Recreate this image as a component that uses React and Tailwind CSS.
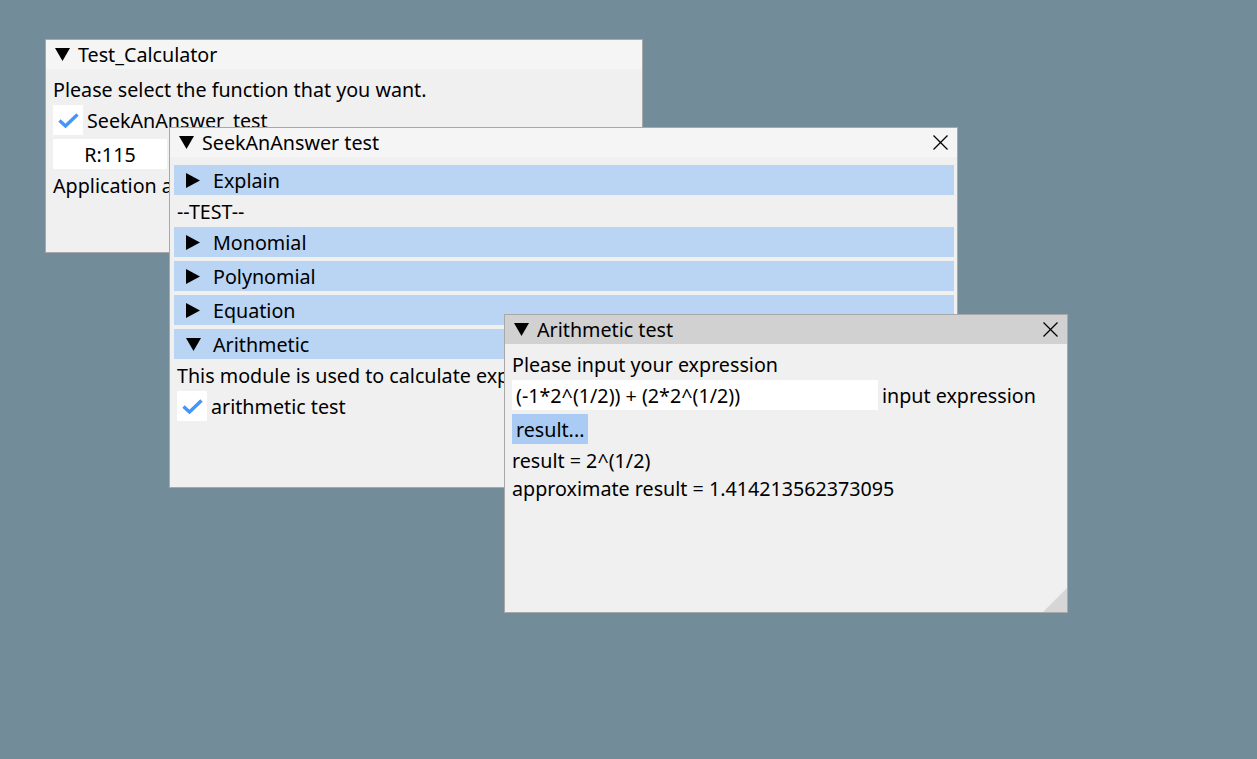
import React from "react";

function DownTri() {
  return (
    <span className="w-[16px] h-[16px] flex items-center justify-center shrink-0">
      <svg width="15" height="13" viewBox="0 0 15 13">
        <polygon points="0,0 15,0 7.5,13" fill="#000" />
      </svg>
    </span>
  );
}

function RightTri() {
  return (
    <span className="w-[16px] h-[16px] flex items-center justify-center shrink-0">
      <svg width="14" height="15" viewBox="0 0 14 15">
        <polygon points="0,0 14,7.5 0,15" fill="#000" />
      </svg>
    </span>
  );
}

function CloseX() {
  return (
    <svg width="15" height="15" viewBox="0 0 15 15" className="ml-auto shrink-0">
      <line x1="0.5" y1="0.5" x2="14.5" y2="14.5" stroke="#000" strokeWidth="1.2" />
      <line x1="14.5" y1="0.5" x2="0.5" y2="14.5" stroke="#000" strokeWidth="1.2" />
    </svg>
  );
}

function Checkbox({ label }) {
  return (
    <div className="flex items-center h-[30px]">
      <div className="w-[30px] h-[30px] bg-white flex items-center justify-center shrink-0">
        <svg width="21" height="15" viewBox="0 0 21 15">
          <polyline points="1.5,7.5 7.5,13 19.5,1.5" fill="none" stroke="#4296fa" strokeWidth="3.4" />
        </svg>
      </div>
      <span className="ml-[4px] pt-[2px] whitespace-nowrap">{label}</span>
    </div>
  );
}

function Header({ label, open }) {
  return (
    <div className="h-[30px] -ml-[3px] -mr-[4px] bg-[#bad4f3] flex items-center pl-[11px] shrink-0">
      {open ? <DownTri /> : <RightTri />}
      <span className="ml-[12px] pt-[2px] whitespace-nowrap">{label}</span>
    </div>
  );
}

function Line({ children }) {
  return <div className="h-[24px] pt-[2px] flex items-center whitespace-nowrap shrink-0">{children}</div>;
}

function Win({ className, title, active, close, grip, children }) {
  return (
    <div className={`absolute flex flex-col border border-[#a8a8a8] bg-[#f0f0f0] overflow-hidden ${className}`}>
      <div className={`flex items-center h-[29px] shrink-0 pl-[8px] pr-[9px] ${active ? "bg-[#d1d1d1]" : "bg-[#f5f5f5]"}`}>
        <DownTri />
        <span className="ml-[8px] pt-[1px] whitespace-nowrap">{title}</span>
        {close && <CloseX />}
      </div>
      <div className="flex flex-col gap-[4px] pt-[8px] px-[7px]">{children}</div>
      {grip && (
        <svg width="24" height="24" viewBox="0 0 24 24" className="absolute bottom-[0px] right-[0px]">
          <polygon points="24,0 24,24 0,24" fill="#d6d6d6" />
        </svg>
      )}
    </div>
  );
}

export default function App() {
  return (
    <div className="relative w-[1257px] h-[759px] overflow-hidden bg-[#728c99] text-black text-[19.7px] leading-[24px] font-['Noto_Sans','Open_Sans',sans-serif]">
      {/* Test_Calculator */}
      <Win className="left-[45px] top-[39px] w-[598px] h-[214px]" title="Test_Calculator">
        <Line>Please select the function that you want.</Line>
        <Checkbox label="SeekAnAnswer_test" />
        <div className="flex gap-[4px]">
          <div className="w-[114px] h-[30px] pt-[2px] bg-white flex items-center justify-center">R:115</div>
          <div className="w-[114px] h-[30px] pt-[2px] bg-white flex items-center justify-center">G:140</div>
        </div>
        <Line>Application average 16.667 ms/frame (60.0 FPS)</Line>
      </Win>

      {/* SeekAnAnswer test */}
      <Win className="left-[169px] top-[127px] w-[789px] h-[361px]" title="SeekAnAnswer test" close>
        <Header label="Explain" />
        <Line>--TEST--</Line>
        <Header label="Monomial" />
        <Header label="Polynomial" />
        <Header label="Equation" />
        <Header label="Arithmetic" open />
        <Line>This module is used to calculate expressions.</Line>
        <Checkbox label="arithmetic test" />
      </Win>

      {/* Arithmetic test */}
      <Win className="left-[504px] top-[314px] w-[564px] h-[299px]" title="Arithmetic test" active close grip>
        <Line>Please input your expression</Line>
        <div className="flex items-center h-[30px]">
          <div className="w-[366px] h-[30px] pt-[2px] bg-white flex items-center pl-[4px] whitespace-nowrap">
            (-1*2^(1/2)) + (2*2^(1/2))
          </div>
          <span className="ml-[4px] pt-[2px] whitespace-nowrap">input expression</span>
        </div>
        <div className="flex">
          <div className="h-[30px] pt-[2px] bg-[#aaccf4] flex items-center px-[4px]">result...</div>
        </div>
        <Line>result = 2^(1/2)</Line>
        <Line>approximate result = 1.414213562373095</Line>
      </Win>
    </div>
  );
}
